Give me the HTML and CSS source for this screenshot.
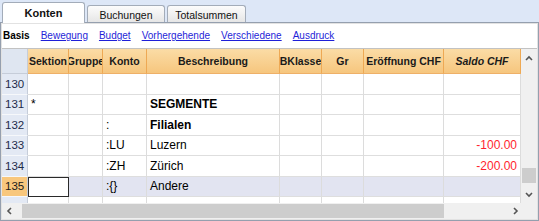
FILE: index.html
```html
<!DOCTYPE html>
<html lang="de">
<head>
  <meta charset="UTF-8">
  <title>Konten</title>
  <link rel="stylesheet" href="styles.css">
</head>
<body>

  <div class="window">
    <div class="tabbar">
      <div class="tab active">Konten</div>
      <div class="tab">Buchungen</div>
      <div class="tab">Totalsummen</div>
    </div>

    <div class="panel">
      <div class="views">
        <span class="view-current">Basis</span>
        <a href="#">Bewegung</a>
        <a href="#">Budget</a>
        <a href="#">Vorhergehende</a>
        <a href="#">Verschiedene</a>
        <a href="#">Ausdruck</a>
      </div>

      <div class="table-area">
        <div class="grid">
          <!-- header -->
          <div class="th corner"></div>
          <div class="th">Sektion</div>
          <div class="th">Gruppe</div>
          <div class="th">Konto</div>
          <div class="th">Beschreibung</div>
          <div class="th">BKlasse</div>
          <div class="th">Gr</div>
          <div class="th">Eröffnung CHF</div>
          <div class="th italic">Saldo CHF</div>

          <div class="rh">130</div>
          <div class="td"></div><div class="td"></div><div class="td"></div><div class="td"></div>
          <div class="td"></div><div class="td"></div><div class="td"></div><div class="td"></div>

          <div class="rh">131</div>
          <div class="td">*</div><div class="td"></div><div class="td"></div><div class="td bold">SEGMENTE</div>
          <div class="td"></div><div class="td"></div><div class="td"></div><div class="td"></div>

          <div class="rh">132</div>
          <div class="td"></div><div class="td"></div><div class="td">:</div><div class="td bold">Filialen</div>
          <div class="td"></div><div class="td"></div><div class="td"></div><div class="td"></div>

          <div class="rh">133</div>
          <div class="td"></div><div class="td"></div><div class="td">:LU</div><div class="td">Luzern</div>
          <div class="td"></div><div class="td"></div><div class="td"></div><div class="td num neg">-100.00</div>

          <div class="rh">134</div>
          <div class="td"></div><div class="td"></div><div class="td">:ZH</div><div class="td">Zürich</div>
          <div class="td"></div><div class="td"></div><div class="td"></div><div class="td num neg">-200.00</div>

          <div class="rh current">135</div>
          <div class="td sel cursor"></div><div class="td sel"></div><div class="td sel">:{}</div><div class="td sel">Andere</div>
          <div class="td sel"></div><div class="td sel"></div><div class="td sel"></div><div class="td sel"></div>

          <div class="rh">136</div>
          <div class="td"></div><div class="td"></div><div class="td"></div><div class="td"></div>
          <div class="td"></div><div class="td"></div><div class="td"></div><div class="td"></div>
        </div>

        <div class="vscroll">
          <svg class="arrow" width="16" height="18" viewBox="0 0 16 18"><polyline points="5,11 8,8 11,11" /></svg>
          <div class="vtrack"><div class="vthumb"></div></div>
          <svg class="arrow" width="16" height="18" viewBox="0 0 16 18"><polyline points="5,8 8,11 11,8" /></svg>
        </div>
      </div>

      <div class="hscroll">
        <svg class="arrow" width="18" height="16" viewBox="0 0 18 16"><polyline points="9,5 6,8 9,11" /></svg>
        <div class="htrack"><div class="hthumb"></div></div>
        <svg class="arrow" width="18" height="16" viewBox="0 0 18 16"><polyline points="9,5 12,8 9,11" /></svg>
        <div class="corner-box"></div>
      </div>
    </div>
  </div>

</body>
</html>
```

FILE: styles.css
```css
body {
  margin: 0;
  padding: 0;
  background-color: #ffffff;
  font-family: "Liberation Sans", Arial, sans-serif;
}

.window {
  width: 539px;
  height: 221px;
  overflow: hidden;
}

/* tabs */
.tabbar {
  height: 22px;
  box-sizing: border-box;
  padding-left: 2px;
  display: flex;
  align-items: flex-end;
  gap: 2px;
  background-color: #dde7f7;
}

.tab {
  width: 78px;
  height: 17px;
  box-sizing: border-box;
  border: 1px solid #a3acb9;
  border-bottom: none;
  border-radius: 3px 3px 0 0;
  background: linear-gradient(#fcfcfc, #e6e6e6);
  font-size: 10.5px;
  color: #111;
  display: flex;
  align-items: center;
  justify-content: center;
  padding-top: 1px;
}

.tab.active {
  width: 83px;
  height: 21px;
  margin-bottom: -1px;
  position: relative;
  z-index: 1;
  background: #ffffff;
  font-weight: bold;
  font-size: 11px;
  padding-top: 0;
}

.tab:last-child {
  width: 79px;
}

/* panel */
.panel {
  height: 199px;
  box-sizing: border-box;
  border: 1px solid #959fae;
  padding: 0 1px 1px 1px;
  box-shadow: inset 0 0 0 1px #e2e2e2;
  background-color: #ffffff;
}

.views {
  height: 25px;
  display: flex;
  align-items: center;
  gap: 11px;
  padding-left: 1px;
  font-size: 10px;
}

.view-current {
  font-weight: bold;
  color: #000;
}

.views a {
  color: #1f1fd8;
  text-decoration: underline;
}

.table-area {
  height: 155px;
  box-sizing: border-box;
  border-top: 1px solid #c2c2c2;
  display: flex;
}

.grid {
  width: 519px;
  overflow: hidden;
  display: grid;
  grid-template-columns: 26px 41px 34px 44px 133px 42px 42px 80px 77px;
  grid-template-rows: 25px repeat(7, 20.5px);
}

.th {
  box-sizing: border-box;
  background: linear-gradient(#fbdca6, #f6c67e);
  border-right: 1px solid #eea954;
  border-bottom: 1px solid #eeb068;
  font-size: 10.5px;
  font-weight: bold;
  color: #1a1a1a;
  display: flex;
  align-items: center;
  justify-content: center;
  white-space: nowrap;
  overflow: hidden;
}

.th.corner {
  background: #dfe6f1;
  border-right: 1px solid #c6cdd9;
  border-bottom: 1px solid #c6cdd9;
}

.th.italic {
  font-style: italic;
}

.rh {
  box-sizing: border-box;
  background-color: #e3e9f4;
  border-right: 1px solid #c6cdd9;
  border-bottom: 1px solid #f6f8fb;
  font-size: 11.5px;
  color: #1d2b4a;
  display: flex;
  align-items: center;
  padding-left: 3px;
}

.rh.current {
  background-color: #f8c77d;
  color: #1a1a1a;
}

.td {
  box-sizing: border-box;
  border-right: 1px solid #dcdcdc;
  border-bottom: 1px solid #dedede;
  font-size: 12px;
  color: #000;
  display: flex;
  align-items: center;
  padding-left: 3px;
  white-space: nowrap;
  overflow: hidden;
}

.td.bold {
  font-weight: bold;
}

.td.num {
  justify-content: flex-end;
  padding-left: 0;
  padding-right: 3px;
}

.td.neg {
  color: #ff1f2f;
}

.td.sel {
  background-color: #e2e4f1;
}

.td.cursor {
  background-color: #ffffff;
  border: 1px solid #2a2a2a;
}

/* scrollbars */
.vscroll {
  width: 16px;
  background-color: #f0f0f0;
  display: flex;
  flex-direction: column;
}

.arrow polyline {
  fill: none;
  stroke: #555;
  stroke-width: 1.6;
}

.vtrack {
  flex: 1;
  position: relative;
}

.vthumb {
  position: absolute;
  left: 1px;
  right: 1px;
  top: 101px;
  height: 15px;
  background-color: #cdcdcd;
}

.hscroll {
  height: 16px;
  background-color: #f0f0f0;
  display: flex;
  align-items: stretch;
}

.htrack {
  width: 485px;
  position: relative;
}

.hthumb {
  position: absolute;
  top: 1px;
  bottom: 1px;
  left: 2px;
  width: 422px;
  background-color: #cdcdcd;
}

.corner-box {
  flex: 1;
  background-color: #f0f0f0;
}
```
